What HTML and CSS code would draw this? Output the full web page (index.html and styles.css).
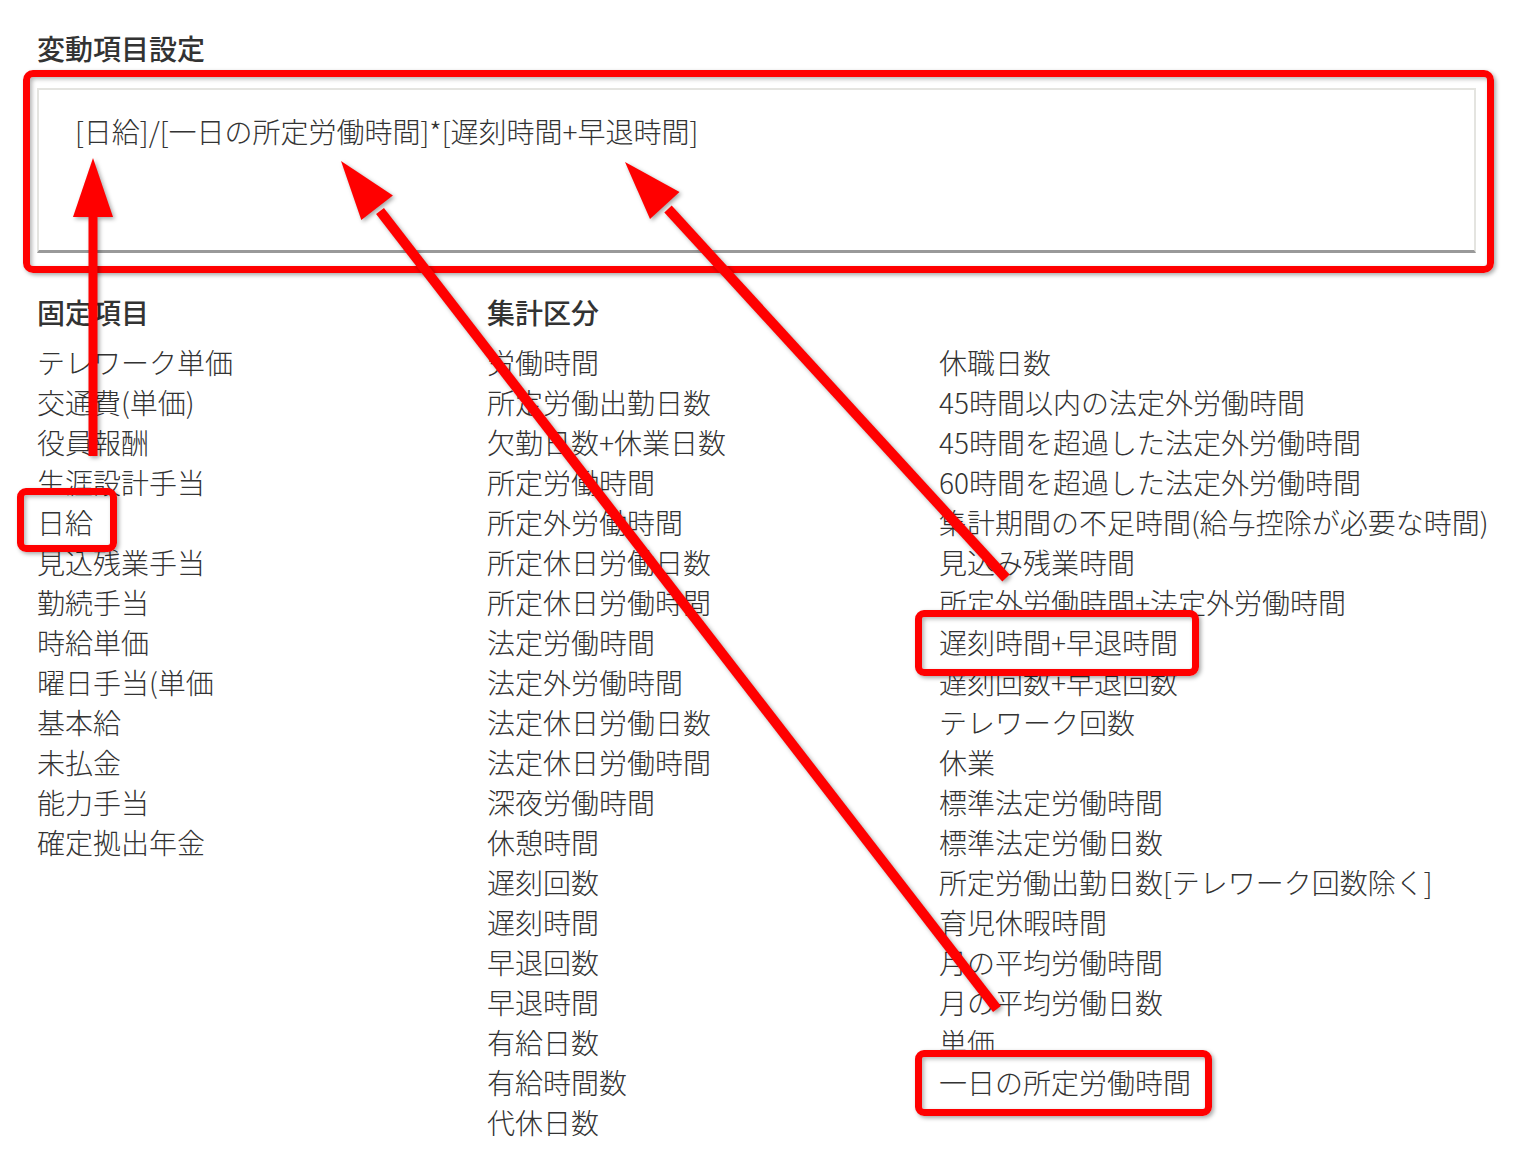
FILE: index.html
```html
<!DOCTYPE html>
<html lang="ja">
<head>
<meta charset="utf-8">
<title>変動項目設定</title>
<link rel="stylesheet" href="styles.css">
</head>
<body>
<div class="page">
  <h2 class="title">変動項目設定</h2>
  <div class="formula-wrap">
    <div class="formula">[日給]/[一日の所定労働時間]*[遅刻時間+早退時間]</div>
  </div>
  <div class="columns">
    <div class="col">
      <h3 class="col-head">固定項目</h3>
      <ul class="items">
        <li>テレワーク単価</li>
        <li>交通費(単価)</li>
        <li>役員報酬</li>
        <li>生涯設計手当</li>
        <li><span class="mark mark-first">日給</span></li>
        <li>見込残業手当</li>
        <li>勤続手当</li>
        <li>時給単価</li>
        <li>曜日手当(単価</li>
        <li>基本給</li>
        <li>未払金</li>
        <li>能力手当</li>
        <li>確定拠出年金</li>
      </ul>
    </div>
    <div class="col">
      <h3 class="col-head">集計区分</h3>
      <ul class="items">
        <li>労働時間</li>
        <li>所定労働出勤日数</li>
        <li>欠勤日数+休業日数</li>
        <li>所定労働時間</li>
        <li>所定外労働時間</li>
        <li>所定休日労働日数</li>
        <li>所定休日労働時間</li>
        <li>法定労働時間</li>
        <li>法定外労働時間</li>
        <li>法定休日労働日数</li>
        <li>法定休日労働時間</li>
        <li>深夜労働時間</li>
        <li>休憩時間</li>
        <li>遅刻回数</li>
        <li>遅刻時間</li>
        <li>早退回数</li>
        <li>早退時間</li>
        <li>有給日数</li>
        <li>有給時間数</li>
        <li>代休日数</li>
      </ul>
    </div>
    <div class="col">
      <h3 class="col-head">&nbsp;</h3>
      <ul class="items">
        <li>休職日数</li>
        <li>45時間以内の法定外労働時間</li>
        <li>45時間を超過した法定外労働時間</li>
        <li>60時間を超過した法定外労働時間</li>
        <li>集計期間の不足時間(給与控除が必要な時間)</li>
        <li>見込み残業時間</li>
        <li>所定外労働時間+法定外労働時間</li>
        <li><span class="mark">遅刻時間+早退時間</span></li>
        <li>遅刻回数+早退回数</li>
        <li>テレワーク回数</li>
        <li>休業</li>
        <li>標準法定労働時間</li>
        <li>標準法定労働日数</li>
        <li>所定労働出勤日数[テレワーク回数除く]</li>
        <li>育児休暇時間</li>
        <li>月の平均労働時間</li>
        <li>月の平均労働日数</li>
        <li>単価</li>
        <li><span class="mark">一日の所定労働時間</span></li>
      </ul>
    </div>
  </div>
  <svg class="arrows" width="1524" height="1166" viewBox="0 0 1524 1166">
    <g class="arrow">
      <line x1="93" y1="456" x2="93" y2="210" stroke="#ff0000" stroke-width="9"/>
      <polygon points="93,158 113,217 73,217" fill="#ff0000"/>
    </g>
    <g class="arrow">
      <line x1="997" y1="1009" x2="380" y2="211" stroke="#ff0000" stroke-width="10"/>
      <polygon points="341,161 392.9,195.4 361.3,219.9" fill="#ff0000"/>
    </g>
    <g class="arrow">
      <line x1="1006" y1="578" x2="668" y2="209" stroke="#ff0000" stroke-width="10"/>
      <polygon points="625,162 679.5,192 650,219" fill="#ff0000"/>
    </g>
  </svg>
</div>
</body>
</html>
```
FILE: styles.css
```css
* { box-sizing: border-box; }
html, body {
  margin: 0;
  padding: 0;
  background: #ffffff;
}
body {
  font-family: "Noto Sans CJK JP", "Noto Sans", sans-serif;
  color: #333333;
}
.page {
  position: relative;
  width: 1524px;
  height: 1166px;
  padding: 28px 0 0 37px;
  overflow: hidden;
}
.title {
  margin: 0;
  font-size: 28px;
  line-height: 40px;
  font-weight: 500;
  color: #333;
}
.formula-wrap {
  position: relative;
  margin-top: 20px;
  width: 1439px;
}
.formula-wrap::after {
  content: "";
  position: absolute;
  top: -18px;
  left: -14px;
  right: -18px;
  bottom: -20px;
  border: 7px solid #ff0000;
  border-radius: 10px;
  box-shadow: 2px 2px 4px rgba(0,0,0,0.35), inset 2px 2px 4px rgba(0,0,0,0.3);
  pointer-events: none;
}
.formula {
  height: 165px;
  padding: 21px 36px 0 36px;
  border: 2px solid #e4e4e0;
  border-bottom: 3px solid #999999;
  background: #ffffff;
  font-size: 28px;
  line-height: 40px;
  font-weight: 300;
  color: #333;
}
.columns {
  display: grid;
  grid-template-columns: 450px 452px 1fr;
  margin-top: 39px;
}
.col-head {
  margin: 0;
  font-size: 28px;
  line-height: 40px;
  font-weight: 500;
  color: #333;
}
.items {
  list-style: none;
  margin: 10px 0 0 0;
  padding: 0;
}
.items li {
  font-size: 28px;
  line-height: 40px;
  height: 40px;
  font-weight: 300;
  white-space: nowrap;
  color: #333;
}
.mark {
  position: relative;
  display: inline-block;
}
.mark::after {
  content: "";
  position: absolute;
  top: -12px;
  bottom: -14px;
  left: -24px;
  right: -21px;
  border: 7px solid #ff0000;
  border-radius: 9px;
  box-shadow: 2px 2px 4px rgba(0,0,0,0.35), inset 2px 2px 4px rgba(0,0,0,0.3);
}
.mark-first::after {
  top: -14px;
  bottom: -10px;
  left: -20px;
  right: -24px;
}
.arrows {
  position: absolute;
  left: 0;
  top: 0;
  pointer-events: none;
}
.arrow {
  filter: drop-shadow(2px 2px 2px rgba(0,0,0,0.35));
}
```
